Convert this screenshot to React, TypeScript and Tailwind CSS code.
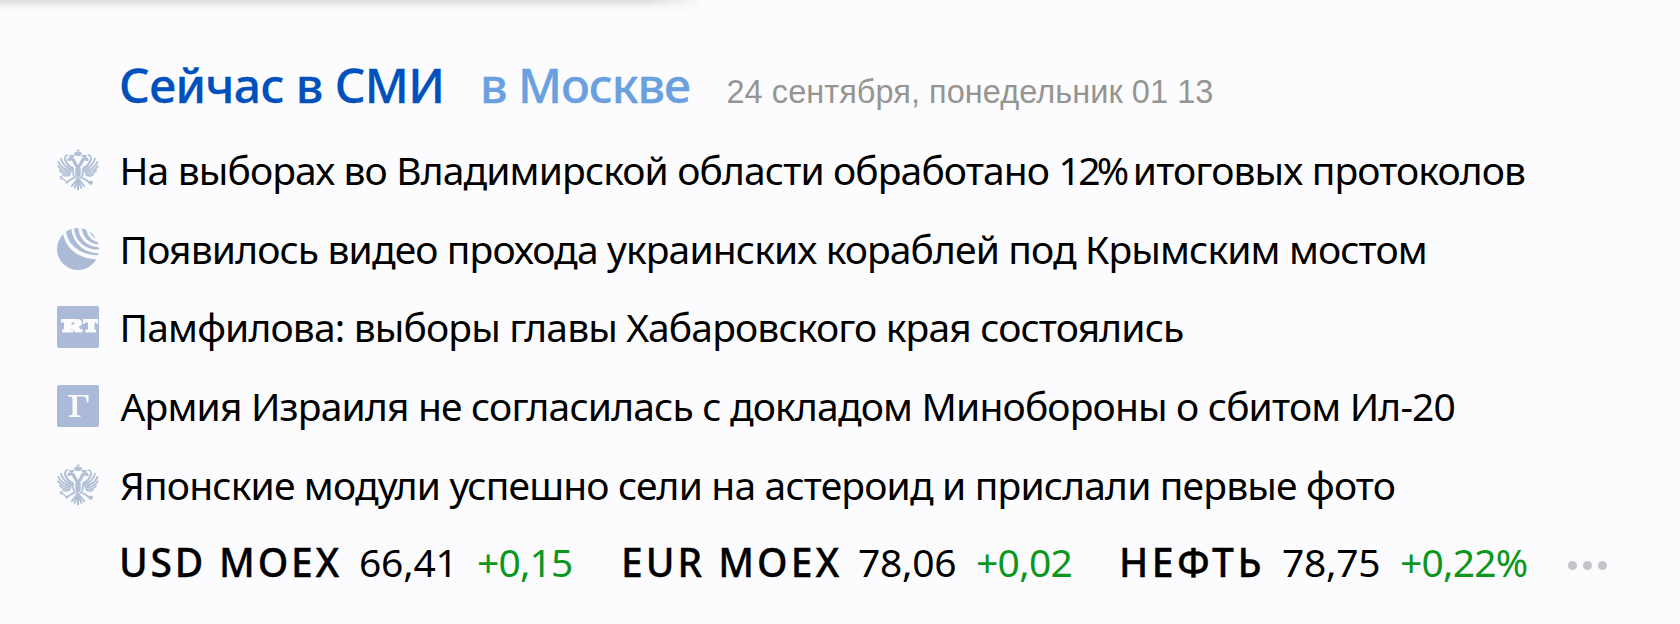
import type { ReactNode } from "react";

function EagleHalf() {
  return (
    <g fill="none" stroke="#b2c0d6" strokeLinecap="round" strokeLinejoin="round">
      {/* head, beak and small crown */}
      <path d="M20.2 17.5 C18.5 16 17.800 13.500 16.400 11 C15.400 9.400 13.800 9.400 12 10.400" strokeWidth="3.300" />
      <path d="M13.2 7 L16.4 7" strokeWidth="2" />
      <path d="M17.3 5.2 C18 3.8 19 3.4 20 3.6" strokeWidth="1.4" />
      <path d="M7.8 9.8 C8 7.4 9 6.2 10.6 6" strokeWidth="1.7" />
      {/* wing feathers */}
      <path d="M15.6 19 C12 17.6 9.5 14.5 8.2 10.8" strokeWidth="2.2" />
      <path d="M14.8 20.4 C10 19.6 5.4 15.4 3.9 9.6" strokeWidth="1.900" />
      <path d="M14 21.9 C8.6 21.4 3.6 17.8 1.5 12.9" strokeWidth="1.900" />
      <path d="M13.6 23.5 C8.6 23.6 3.8 21.4 1.2 17.2" strokeWidth="1.800" />
      <path d="M13 25.1 C9 25.7 5.4 24.8 2.8 21.8" strokeWidth="1.700" />
      <path d="M12.2 26.6 C9.8 27.3 7.6 27.1 5.8 25.9" strokeWidth="1.500" />
      {/* body, leg and tail */}
      <path d="M15.8 19.5 L16.4 25.5 C16.8 27.2 17.6 28.5 18.9 29.2" strokeWidth="1.8" />
      <path d="M16.3 29.2 L12.2 31.5 L9.5 33.8" strokeWidth="2" />
      <path d="M20 31 L14.8 37.2" strokeWidth="2" />
      <path d="M20.5 32 L17.6 38.8" strokeWidth="2" />
    </g>
  );
}

function EagleIcon() {
  return (
    <svg viewBox="0 0 42 42" className="size-[42px]">
      <EagleHalf />
      <g transform="translate(42 0) scale(-1 1)">
        <EagleHalf />
      </g>
      <g fill="#b2c0d6">
        <path d="M20.5 0h1v1.2h1.3v1h-1.3v1.1h2.2l.6 1.3-1 2.4h-4.6l-1-2.4.6-1.3h2.2V2.200h-1.300v-1h1.300z" />
        <path d="M18.300 19h5.400v6.400c0 1.600-1.200 2.700-2.700 3.500-1.500-.8-2.700-1.900-2.700-3.500z" />
        <path d="M20 29h2v11.500l-1 1-1-1z" />
        <circle cx="33.800" cy="33.600" r="2.200" />
      </g>
      <path d="M10.500 34 3 27.200M3 30.200l2.600-2.800" stroke="#b2c0d6" strokeWidth="1.300" fill="none" />
    </svg>
  );
}

function GlobeIcon() {
  return (
    <svg viewBox="0 0 42 42" className="size-[42px]">
      <clipPath id="globe">
        <circle cx="21" cy="21" r="21" />
      </clipPath>
      <g fill="#abbbd6" clipPath="url(#globe)">
        <path d="M6 5C8.500 20.500 21.500 31.500 42 31.400V42H0V5z" />
        <path d="M8.800 3 14.200 0C15.800 14.500 26 25 42 25.200V27.200C24.500 27.600 11.200 18 8.800 3z" />
        <path d="M17 0H21.200C22 10.500 30 18.800 42 19.400V21.600C28.500 22 18 13.200 17 0z" />
        <path d="M24.600 0 29 0C30 8 34.500 13 42 14.600V16.600C32.500 16 25.600 9.500 24.600 0z" />
        <path d="M32.200 2.500C35.400 4.500 37.500 6.500 39.500 10.400 35.800 9 33.500 6.700 32.200 2.500z" />
      </g>
    </svg>
  );
}

function RtIcon() {
  return (
    <div className="flex size-[42px] rounded-[2px] bg-[#aabad8] pt-[13px] pl-1">
      <svg viewBox="0 0 38 14" className="h-[14px] w-[38px]" fill="#fcfcfe">
        <path
          fillRule="evenodd"
          d="M0 0H16C19.500 0 21 1.500 21 3.800 21 6 19.800 7.200 17.700 7.600L19.300 10H21.500V13.500H14L10.500 9V10.500H12V13.500H1V10.500H3V3.500H0zM10.500 3.500V5.500H12.500C14 5.500 14 3.500 12.500 3.500z"
        />
        <path d="M22 0H37V5H35.500V3.500H33.500V10.500H35V13.500H24.500V10.500H27V3.500H24V5H22z" />
      </svg>
    </div>
  );
}

function GazetaIcon() {
  return (
    <div className="flex size-[42px] rounded-[2px] bg-[#abbad8] pt-[10px] pl-[11px]">
      <svg viewBox="0 0 21 22" className="h-[22px] w-[21px]" fill="#fcfcfe">
        <path d="M0 0H20.500V7.500H19L18 3.500C17.700 2.200 17 1.600 15.500 1.600H9V18.500C9 20 9.500 20.300 12.500 20.500V22H.8V20.500C3.800 20.300 4.500 20 4.500 18.500V3.500C4.500 2 3.500 1.700 0 1.500z" />
      </svg>
    </div>
  );
}

function NewsRow({ icon, children, className }: { icon: ReactNode; children: ReactNode; className: string }) {
  return (
    <li className="flex h-[78.6px] items-center pl-[57px]">
      <span className="w-[62.500px] shrink-0 pt-px">{icon}</span>
      <a className={`whitespace-nowrap ${className}`}>{children}</a>
    </li>
  );
}

export default function App() {
  return (
    <main className="h-[624px] w-[1680px] overflow-hidden bg-[#fcfcfe] font-['Noto_Sans',sans-serif] text-[39px] leading-[53px] text-black">
      <div className="-mb-3 h-3 w-[705px] bg-linear-to-b from-[#dddddb] via-[#f2f2f1] via-50% to-transparent mask-r-from-92%" />
      <header className="flex h-[130.400px] items-baseline pt-[53px] pl-[119px] whitespace-nowrap">
        <h1 className="w-[361px] text-[48px] leading-[64px] font-medium tracking-[-0.600px] text-[#0050bd] [-webkit-text-stroke:0.3px_#0050bd]">Сейчас в СМИ</h1>
        <h2 className="w-[246.500px] text-[48px] leading-[64px] font-medium tracking-[-1.050px] text-[#6a9fe0] [-webkit-text-stroke:0.3px_#6a9fe0]">в Москве</h2>
        <time className="font-['Liberation_Sans',sans-serif] text-[32.500px] tracking-[0.050px] text-[#959592]">
          24 сентября, понедельник 01 13
        </time>
      </header>
      <ul>
        <NewsRow icon={<EagleIcon />} className="tracking-[-0.870px]">
          На выборах во Владимирской области обработано <span className="tracking-[-2.400px]">1</span><span className="tracking-[-3.800px]">2%</span><span className="tracking-[-2.800px]"> </span>итоговых протоколов
        </NewsRow>
        <NewsRow icon={<GlobeIcon />} className="tracking-[-0.880px]">
          Появилось видео прохода украинских кораблей под Крымским мостом
        </NewsRow>
        <NewsRow icon={<RtIcon />} className="tracking-[-0.850px]">
          Памфилова: выборы главы Хабаровского края состоялись
        </NewsRow>
        <NewsRow icon={<GazetaIcon />} className="pl-[1px] tracking-[-0.830px]">
          Армия Израиля не согласилась с докладом Минобороны о сбитом Ил-20
        </NewsRow>
        <NewsRow icon={<EagleIcon />} className="pl-[0.500px] tracking-[-0.840px]">
          Японские модули успешно сели на астероид и прислали первые фото
        </NewsRow>
      </ul>
      <footer className="grid h-[76px] grid-cols-[240px_118px_144px_237px_118px_143px_163px_118px_168px_auto] items-center pl-[119px] whitespace-nowrap">
        <b className="font-medium tracking-[2.800px] [-webkit-text-stroke:0.3px_#000]">USD MOEX</b>
        <span className="tracking-[-0.200px]">66,41</span>
        <span className="tracking-[-0.850px] text-[#0b971d]">+0,15</span>
        <b className="font-medium tracking-[3px] [-webkit-text-stroke:0.3px_#000]">EUR MOEX</b>
        <span className="tracking-[-0.300px]">78,06</span>
        <span className="tracking-[-0.700px] text-[#0b971d]">+0,02</span>
        <b className="font-medium tracking-[3.500px] [-webkit-text-stroke:0.3px_#000]">НЕФТЬ</b>
        <span className="tracking-[-0.300px]">78,75</span>
        <span className="tracking-[-0.800px] text-[#0b971d]">+0,22%</span>
        <span className="flex gap-[6px] pt-[8px]">
          <i className="size-[9px] rounded-full bg-[#c4c4c9]" />
          <i className="size-[9px] rounded-full bg-[#c4c4c9]" />
          <i className="size-[9px] rounded-full bg-[#c4c4c9]" />
        </span>
      </footer>
    </main>
  );
}
